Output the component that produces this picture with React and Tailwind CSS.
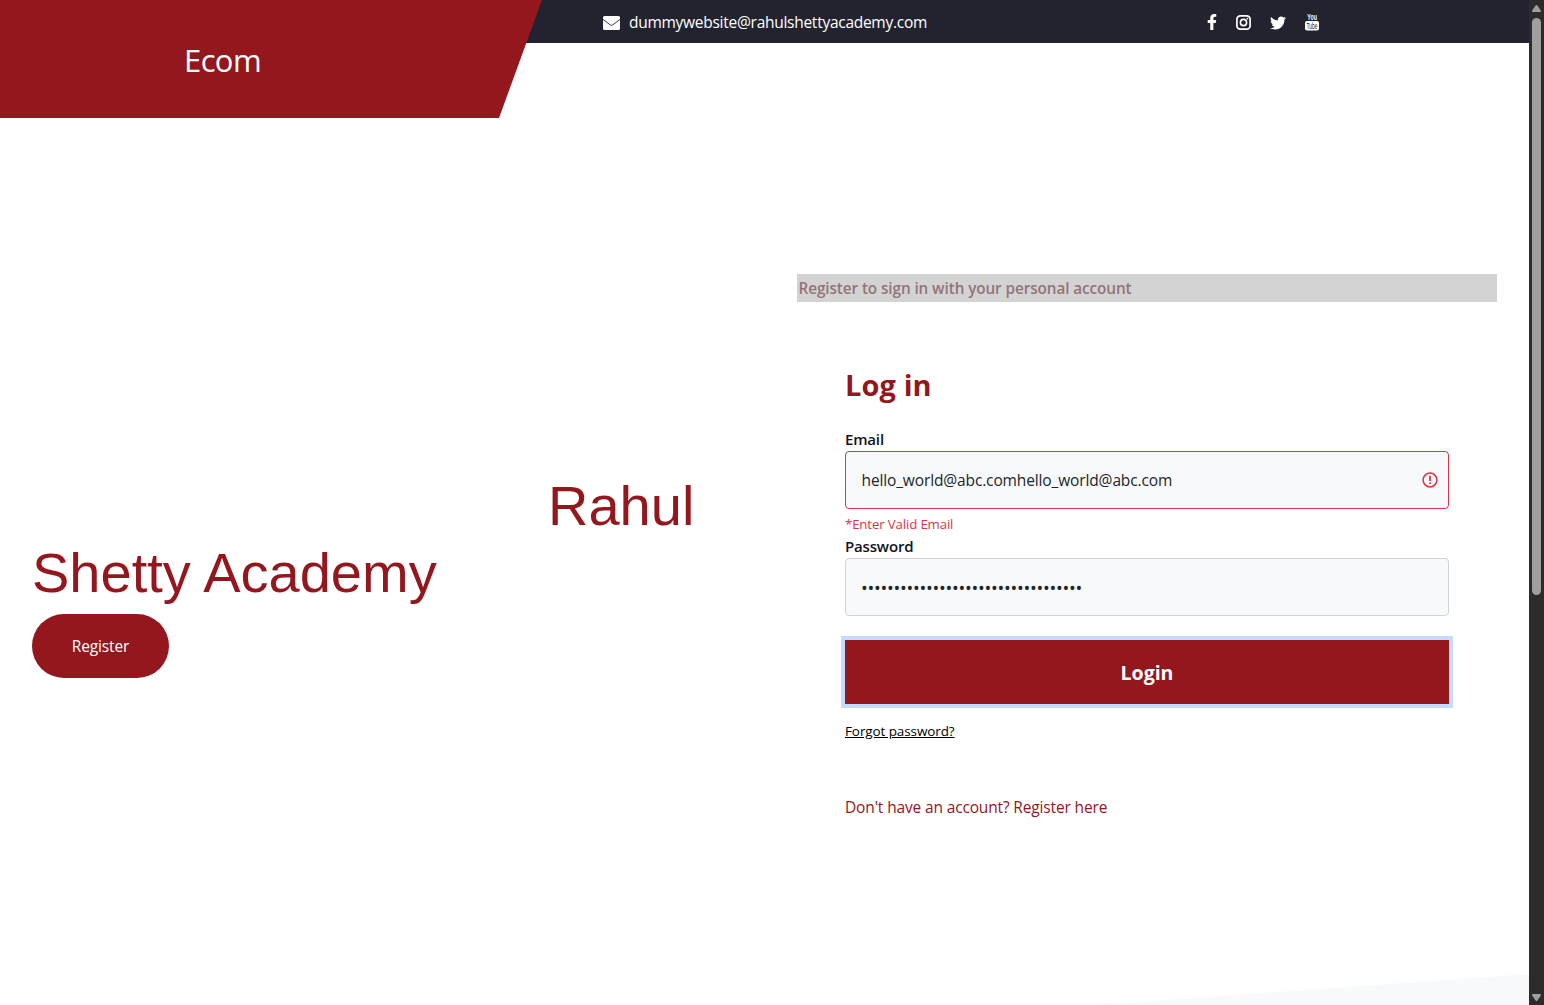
import React from 'react';
import { FaFacebookF, FaTwitter } from 'react-icons/fa';

function EnvelopeIcon() {
  return (
    <svg className="mt-0.5 h-[14px] w-[17px]" viewBox="0 0 17 14">
      <rect width="17" height="14" rx="1.6" fill="#fff" />
      <path d="M0 3.4 7.2 8.9q1.3.9 2.6 0L17 3.4" fill="none" stroke="#232330" strokeWidth="0.9" />
    </svg>
  );
}

function InstagramIcon() {
  return (
    <svg className="ml-[16px] mt-px h-[15px] w-[15px]" viewBox="0 0 15 15" fill="none" stroke="#fff">
      <rect x="0.9" y="0.9" width="13.2" height="13.2" rx="3.4" strokeWidth="1.7" />
      <circle cx="7.5" cy="7.5" r="3.1" strokeWidth="1.6" />
      <circle cx="11.4" cy="3.6" r="0.9" fill="#fff" stroke="none" />
    </svg>
  );
}

function YoutubeIcon() {
  return (
    <svg className="h-[18px] w-[14px] overflow-visible" viewBox="0 0 14 18">
      <text x="2.3" y="7.2" fontFamily="Liberation Sans" fontSize="9" fontWeight="700" textLength="9.6" lengthAdjust="spacingAndGlyphs" fill="#fff">You</text>
      <rect y="8" width="14" height="9.4" rx="2" fill="#fff" />
      <text x="1.6" y="15.9" fontFamily="Liberation Sans" fontSize="9" textLength="10.8" lengthAdjust="spacingAndGlyphs" fill="#232330">Tube</text>
    </svg>
  );
}

function Header() {
  return (
    <header className="relative h-[118px]">
      <div className="flex h-[43px] items-center bg-[#232330] pl-[603px] text-white">
        <EnvelopeIcon />
        <span className="ml-[9px] w-[579px] pt-0.5 text-[15.5px] tracking-[-0.27px]">dummywebsite@rahulshettyacademy.com</span>
        <FaFacebookF className="-ml-1 h-4 w-4" />
        <InstagramIcon />
        <FaTwitter className="ml-[19px] mt-0.5 h-4 w-4" />
        <span className="ml-[19px]"><YoutubeIcon /></span>
      </div>
      <div className="absolute left-0 top-0 flex h-[118px] w-[542px] items-center bg-[#94171e] pl-[184px] text-white [clip-path:polygon(0_0,100%_0,499px_100%,0_100%)]">
        <span className="mt-[3px] text-[31px] leading-none tracking-[-0.6px]">Ecom</span>
      </div>
    </header>
  );
}

function Hero() {
  return (
    <section className="w-[765px] pl-8 pt-[354px]">
      <h1 className="w-[680px] indent-[516px] font-['Liberation_Sans',sans-serif] text-[56px] leading-[67px] text-[#94171e]">Rahul Shetty Academy</h1>
      <button className="mt-2 block h-16 w-[137px] rounded-full bg-[#94171e] pt-0.5 text-[15.5px] tracking-[-0.12px] text-white">Register</button>
    </section>
  );
}

function LoginForm() {
  return (
    <section className="ml-8 w-[700px] pt-[156px]">
      <p className="h-7 bg-[#d3d3d3] pl-[1.5px] text-[15.3px] font-semibold leading-[29px] tracking-[-0.09px] text-[#93747a]">Register to sign in with your personal account</p>
      <form className="mx-12 mt-[65px] flex flex-col" onSubmit={(e) => e.preventDefault()}>
        <h2 className="text-[29px] font-bold leading-[35px] tracking-[0.1px] text-[#94171e]">Log in</h2>
        <label className="mt-[26px] h-[23px] text-[15px] font-semibold leading-[23px] tracking-[-0.17px] text-[#12121c]">Email</label>
        <div className="flex h-[58px] items-center rounded border border-[#dc3545] bg-[#f8f9fb] pl-[15.5px] pr-[10px]">
          <input className="min-w-0 flex-1 bg-transparent pt-0.5 text-[15.5px] tracking-[-0.13px] text-[#212529] outline-none" defaultValue="hello_world@abc.comhello_world@abc.com" />
          <svg className="h-4 w-4" viewBox="0 0 16 16" fill="none" stroke="#dc3545">
            <circle cx="8" cy="8" r="6.9" strokeWidth="1.5" />
            <path d="M8 3.8v5.2" strokeWidth="1.8" />
            <circle cx="8" cy="11.2" r="1" fill="#dc3545" stroke="none" />
          </svg>
        </div>
        <p className="mt-1 h-[22px] text-[13.2px] leading-[22px] tracking-[-0.12px] text-[#dc3545]">*Enter Valid Email</p>
        <label className="h-[23px] text-[15px] font-semibold leading-[23px] tracking-[-0.17px] text-[#12121c]">Password</label>
        <div className="flex h-[58px] items-center rounded border border-[#ced4da] bg-[#f8f9fb] pl-[15px] pr-4">
          <input type="password" className="w-full bg-transparent pt-0.5 text-[18px] tracking-[-0.27px] text-[#212529] outline-none" defaultValue="hello_world@abc.comhello_world@abc" />
        </div>
        <button className="mt-6 h-16 bg-[#94171e] pt-0.5 text-[19.5px] font-bold text-white shadow-[0_0_0_4px_#c2dbfe]">Login</button>
        <a className="mt-4 self-start text-[13.5px] leading-[22px] tracking-[-0.1px] text-black underline">Forgot password?</a>
        <a className="mt-[53px] text-[15.5px] leading-6 tracking-[-0.15px] text-[#94171e]">Don't have an account? Register here</a>
      </form>
    </section>
  );
}

function Scrollbar() {
  return (
    <div className="flex w-[15px] flex-col items-center justify-between bg-[#2c2c2c]">
      <div className="flex flex-col items-center">
        <svg className="mt-[5px] h-[7px] w-[9px]" viewBox="0 0 9 7"><path d="M3.6.6q.9-1.1 1.8 0L8.8 5.4Q9.3 7 8 7H1Q-.3 7 .2 5.4Z" fill="#9f9f9f" /></svg>
        <div className="mt-1.5 h-[577px] w-[9px] rounded-full bg-[#9f9f9f]" />
      </div>
      <svg className="mb-1 h-[7px] w-[9px]" viewBox="0 0 9 7"><path d="M3.6 6.4q.9 1.1 1.8 0L8.8 1.6Q9.3 0 8 0H1Q-.3 0 .2 1.6Z" fill="#9f9f9f" /></svg>
    </div>
  );
}

export default function App() {
  return (
    <div className="flex h-[1005px] w-[1544px] overflow-hidden bg-white font-['Open_Sans',sans-serif]">
      <main className="flex flex-1 flex-col">
        <Header />
        <div className="flex flex-1">
          <Hero />
          <LoginForm />
        </div>
        <div className="h-[31px] w-[434px] self-end bg-[#f8f9fb] [clip-path:polygon(0_100%,100%_0,100%_100%)]" />
      </main>
      <Scrollbar />
    </div>
  );
}
